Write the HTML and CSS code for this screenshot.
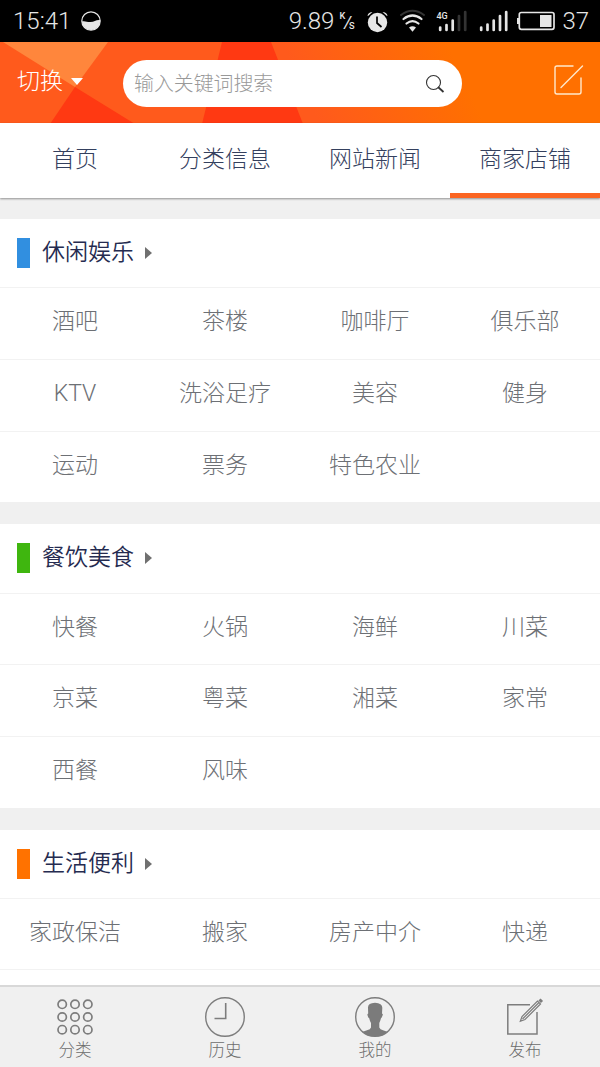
FILE: index.html
```html
<!DOCTYPE html>
<html lang="zh-CN">
<head>
  <meta charset="UTF-8">
  <meta name="viewport" content="width=device-width, initial-scale=1.0">
  <title>商家店铺</title>
  <link rel="stylesheet" href="styles.css">
</head>
<body>
  <div class="status">
    <span class="time">15:41</span>
    <svg class="moon" width="20" height="20" viewBox="0 0 20 20">
      <circle cx="10" cy="10" r="9.2" fill="none" stroke="#e6e6e6" stroke-width="1.2"/>
      <path d="M.8 10.500C4 9.500 6 11.200 9.500 11C13.500 10.700 15 8.500 19.200 9A9.200 9.200 0 1 1 .8 10.500Z" fill="#e6e6e6"/>
    </svg>
    <span class="speed">9.89</span>
    <span class="unit"><sup>K</sup><i>/</i><sub>S</sub></span>
    <svg class="signals" width="190" height="26" viewBox="366 8 190 26">
      <g fill="#e6e6e6">
        <circle cx="378.500" cy="22.500" r="9.700"/>
        <path d="M368.500 15.500Q369.500 12 373.500 12L369 16ZM388.500 15.500Q387.500 12 383.500 12L388 16Z"/>
        <path d="M378 16.500V23L382.500 27" fill="none" stroke="#000" stroke-width="1.700"/>
        <path d="M410 27.500Q413.500 25 417 27.500L413.500 31.800Z"/>
      </g>
      <g fill="none" stroke-linecap="round">
        <path d="M402 15Q413.500 6.500 425 15" stroke="#333" stroke-width="2"/>
        <path d="M404.500 19Q413.500 12 422.500 19M407.500 23.500Q413.500 18.700 419.500 23.500" stroke="#e6e6e6" stroke-width="2.200"/>
      </g>
      <text class="net" x="437.500" y="18.500">4G</text>
      <g stroke-width="2.700" stroke-linecap="round">
        <path d="M441.200 27.500V30M447.500 25V30M453.700 20.500V30" stroke="#e6e6e6"/>
        <path d="M460 16V30M466.200 12V30" stroke="#333"/>
        <path d="M482.200 27.500V30M488.500 24.500V30M494.700 20.500V30M501 16V30M507.200 12V30" stroke="#e6e6e6"/>
      </g>
      <rect x="520.300" y="12.500" width="34.700" height="16.800" rx="2" fill="none" stroke="#e6e6e6" stroke-width="1.700"/>
      <path d="M518 18H520V24H518ZM541 15H552.500V27H541Z" fill="#e6e6e6"/>
    </svg>
    <span class="battery">37</span>
  </div>

  <header>
    <svg class="header-bg" width="600" height="82" viewBox="0 0 600 82">
      <path d="M3 0H108L75 45Z" fill="#ff863c"/>
      <path d="M75 45L135 82H50Z" fill="#ff3912"/>
      <path d="M222 0H271L303 82H202Z" fill="#ff3912"/>
    </svg>
    <a class="city">切换<i></i></a>
    <div class="search">
      <span>输入关键词搜索</span>
      <svg width="20" height="20" viewBox="0 0 20 20" fill="none" stroke="#333">
        <circle cx="8.500" cy="8.500" r="7" stroke-width="1.100"/>
        <path d="M13 13L18.500 18" stroke-width="1.800"/>
      </svg>
    </div>
    <svg class="edit" width="32" height="34" viewBox="0 0 32 34" fill="none" stroke="#ffe9cc" stroke-width="1.400">
      <path d="M21 3H5Q3 3 3 5V29Q3 31 5 31H27Q29 31 29 29V15M9 24.500L30.500 3" stroke-linecap="round"/>
    </svg>
  </header>

  <nav>
    <a>首页</a>
    <a>分类信息</a>
    <a>网站新闻</a>
    <a class="active">商家店铺</a>
  </nav>

  <main>
    <section>
      <h2 class="blue">休闲娱乐</h2>
      <ul>
        <li>酒吧</li><li>茶楼</li><li>咖啡厅</li><li>俱乐部</li>
        <li>KTV</li><li>洗浴足疗</li><li>美容</li><li>健身</li>
        <li>运动</li><li>票务</li><li>特色农业</li><li></li>
      </ul>
    </section>
    <section>
      <h2 class="green">餐饮美食</h2>
      <ul>
        <li>快餐</li><li>火锅</li><li>海鲜</li><li>川菜</li>
        <li>京菜</li><li>粤菜</li><li>湘菜</li><li>家常</li>
        <li>西餐</li><li>风味</li><li></li><li></li>
      </ul>
    </section>
    <section>
      <h2 class="orange">生活便利</h2>
      <ul>
        <li>家政保洁</li><li>搬家</li><li>房产中介</li><li>快递</li>
        <li></li><li></li><li></li><li></li>
      </ul>
    </section>
  </main>

  <footer>
    <a>
      <svg width="42" height="42" viewBox="0 0 42 42" fill="none" stroke="#7d7d7d" stroke-width="1.700">
        <circle cx="8.200" cy="8.300" r="4.200"/><circle cx="21" cy="8.300" r="4.200"/><circle cx="33.800" cy="8.300" r="4.200"/>
        <circle cx="8.200" cy="21" r="4.200"/><circle cx="21" cy="21" r="4.200"/><circle cx="33.800" cy="21" r="4.200"/>
        <circle cx="8.200" cy="33.700" r="4.200"/><circle cx="21" cy="33.700" r="4.200"/><circle cx="33.800" cy="33.700" r="4.200"/>
      </svg>
      <span>分类</span>
    </a>
    <a>
      <svg width="42" height="42" viewBox="0 0 42 42" fill="none" stroke="#7d7d7d" stroke-width="1.400">
        <circle cx="21" cy="21" r="19.300"/>
        <path d="M21.700 7V22.500H10.500" stroke-width="1.600"/>
      </svg>
      <span>历史</span>
    </a>
    <a>
      <svg width="42" height="42" viewBox="0 0 42 42">
        <circle cx="21" cy="21" r="19.300" fill="none" stroke="#7d7d7d" stroke-width="1.400"/>
        <path d="M14 12Q13.500 7 21 6.700Q28.500 7 28.300 12L28 17.500Q29.500 18 28.300 20Q27.800 22 27 22.300Q26.300 25 25.300 27V31.500Q26 33.500 29 34.200L34 36Q28 40.500 21 40.500Q14 40.500 8 36L13 34.200Q16.500 33.500 17 31.500V27Q15.800 25 15.200 22.300Q14 21.500 13.600 19.500Q13 18 14.200 17.500Z" fill="#7b7b7b"/>
      </svg>
      <span>我的</span>
    </a>
    <a>
      <svg width="42" height="42" viewBox="0 0 42 42" fill="none" stroke="#7d7d7d" stroke-width="1.500">
        <path d="M26 8.800H3.800V38H33V16"/>
        <path d="M16.300 25.300L18 20.500L33.500 5L36.500 8L21 23.500ZM18.500 23L35 6.500" stroke-width="1.200"/>
        <path d="M35.500 3.500L38 6" stroke-width="3"/>
      </svg>
      <span>发布</span>
    </a>
  </footer>
</body>
</html>
```

FILE: styles.css
```css
* {
  box-sizing: border-box;
}
body {
  display: flex;
  flex-direction: column;
  height: 1067px;
  margin: 0;
  overflow: hidden;
  background-color: #f0f0f0;
  font-family: Roboto, "Noto Sans CJK SC", sans-serif;
  font-weight: 300;
}
.status {
  display: flex;
  flex: none;
  align-items: center;
  height: 42px;
  padding: 0 11px 0 13px;
  background-color: #000;
  color: #e6e6e6;
  font-size: 24px;
}
.time {
  width: 68px;
}
.speed {
  margin-left: auto;
}
.unit {
  display: flex;
  width: 18px;
  height: 20px;
  margin: 0 8px 0 5px;
  font-size: 11px;
  font-weight: 500;
  line-height: 10px;
}
.unit i {
  margin: 0 -2px 0 -1px;
  font-size: 17px;
  font-weight: 400;
  line-height: 22px;
}
.unit sub {
  align-self: flex-end;
}
.net {
  fill: #e6e6e6;
  font-size: 9px;
  font-weight: 500;
}
.battery {
  margin-left: 7px;
}
header {
  position: relative;
  display: flex;
  flex: none;
  height: 81px;
  background: linear-gradient(65deg, #ff5a1c 50%, #ff7000 76%);
}
.header-bg {
  position: absolute;
  top: 0;
  left: 0;
}
.city {
  z-index: 1;
  display: flex;
  width: 123px;
  padding-left: 17px;
  color: #fff;
  font-size: 23px;
  line-height: 79px;
}
.city i {
  width: 0;
  height: 0;
  margin: 36px 0 0 8px;
  border: 6px solid transparent;
  border-top: 7px solid #fff;
}
.search {
  z-index: 1;
  display: flex;
  align-items: center;
  justify-content: space-between;
  width: 339px;
  height: 47px;
  margin-top: 18px;
  padding: 0 17px 0 11px;
  border-radius: 24px;
  background-color: #fff;
  color: #999;
  font-size: 19.900px;
}
.search span {
  padding-bottom: 2px;
}
.edit {
  z-index: 1;
  margin: 21px 0 0 90px;
}
nav {
  z-index: 1;
  display: flex;
  flex: none;
  height: 75px;
  background-color: #fff;
  box-shadow: 0 1px 2px rgba(0, 0, 0, 0.4);
}
nav a {
  width: 150px;
  color: #34405e;
  font-size: 23px;
  line-height: 73px;
  text-align: center;
}
nav .active {
  border-bottom: 5px solid #fb6522;
}
main {
  flex: 1;
  overflow: hidden;
  padding-top: 21px;
}
section {
  margin-bottom: 22px;
  background-color: #fff;
}
h2 {
  display: flex;
  align-items: center;
  height: 68.3px;
  margin: 0;
  padding: 0 0 6px 17px;
  color: #252b50;
  font-size: 23px;
  font-family: "Noto Sans CJK SC DemiLight", "Noto Sans CJK SC", sans-serif;
  font-weight: 350;
}
h2::before {
  content: "";
  width: 13px;
  height: 30px;
  margin: 6px 12px 0 0;
}
h2::after {
  content: "";
  margin: 6px 0 0 11px;
  border: 6.5px solid transparent;
  border-left: 7px solid #707070;
  border-right: 0;
}
.blue::before {
  background-color: #318fe0;
}
.green::before {
  background-color: #3fb60f;
}
.orange::before {
  background-color: #ff7200;
}
ul {
  display: grid;
  grid-template-columns: repeat(4, 1fr);
  margin: 0;
  padding: 0;
  list-style: none;
}
li {
  height: 71.67px;
  border-top: 1px solid #f2f2f2;
  color: #6d7075;
  font-size: 23px;
  line-height: 68px;
  text-align: center;
}
footer {
  display: flex;
  flex: none;
  height: 82px;
  border-top: 2px solid #d8d8d8;
  background-color: #f0f0f0;
}
footer a {
  display: flex;
  flex-direction: column;
  align-items: center;
  width: 150px;
  padding-top: 9px;
  color: #6c6c6c;
  font-size: 16.500px;
  line-height: 25px;
}
```
